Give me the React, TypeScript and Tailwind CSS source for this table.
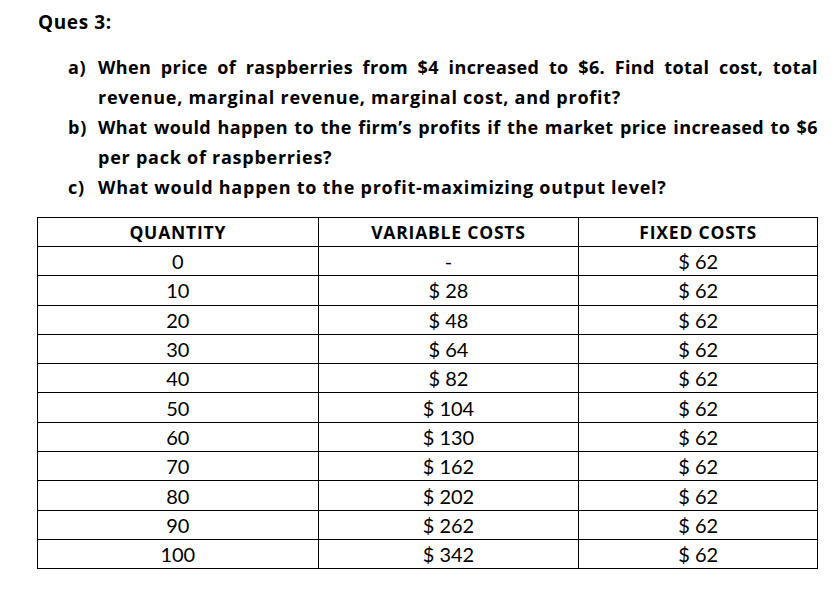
const rows: [string, string, string][] = [
  ['0', '-', '$ 62'],
  ['10', '$ 28', '$ 62'],
  ['20', '$ 48', '$ 62'],
  ['30', '$ 64', '$ 62'],
  ['40', '$ 82', '$ 62'],
  ['50', '$ 104', '$ 62'],
  ['60', '$ 130', '$ 62'],
  ['70', '$ 162', '$ 62'],
  ['80', '$ 202', '$ 62'],
  ['90', '$ 262', '$ 62'],
  ['100', '$ 342', '$ 62'],
]

// a full line that is stretched edge to edge, like Word's justified text
function Full({ children, tight }: { children: React.ReactNode; tight?: boolean }) {
  return (
    <div className={'whitespace-nowrap text-justify [text-align-last:justify]' + (tight ? ' tracking-[0.4px]' : '')}>
      {children}
    </div>
  )
}

function Item({ label, children }: { label: string; children: React.ReactNode }) {
  return (
    <div className="flex">
      <span className="w-[30px] shrink-0">{label}</span>
      <div className="w-[720px]">{children}</div>
    </div>
  )
}

export default function App() {
  return (
    <div className="w-[839px] h-[598px] bg-white text-black font-['Lato',sans-serif] overflow-hidden">
      <div className="pl-[38px] pt-[8px] text-[19px] tracking-[0.6px] font-bold leading-[28px] font-['Open_Sans',sans-serif]">Ques 3:</div>

      <div className="pl-[68px] pt-[16px] text-[18px] tracking-[0.75px] font-bold leading-[30px] font-['Open_Sans',sans-serif]">
        <Item label="a)">
          <Full tight>When price of raspberries from $4 increased to $6. Find total cost, total</Full>
          <div>revenue, marginal revenue, marginal cost, and profit?</div>
        </Item>
        <Item label="b)">
          <Full tight>What would happen to the firm’s profits if the market price increased to $6</Full>
          <div>per pack of raspberries?</div>
        </Item>
        <Item label="c)">
          <div>What would happen to the profit-maximizing output level?</div>
        </Item>
      </div>

      <table className="ml-[37px] mt-[15px] border-collapse w-[781px] text-center">
        <thead>
          <tr className="h-[29px] text-[17.5px] tracking-[0.8px] font-['Open_Sans',sans-serif]">
            <th className="border border-black w-[281px] font-bold">QUANTITY</th>
            <th className="border border-black w-[261px] font-bold">VARIABLE COSTS</th>
            <th className="border border-black w-[239px] font-bold">FIXED COSTS</th>
          </tr>
        </thead>
        <tbody className="text-[20px]">
          {rows.map(r => (
            <tr key={r[0]} className="h-[29.3px]">
              <td className="border border-black leading-none">{r[0]}</td>
              <td className="border border-black leading-none">{r[1]}</td>
              <td className="border border-black leading-none">{r[2]}</td>
            </tr>
          ))}
        </tbody>
      </table>
    </div>
  )
}
